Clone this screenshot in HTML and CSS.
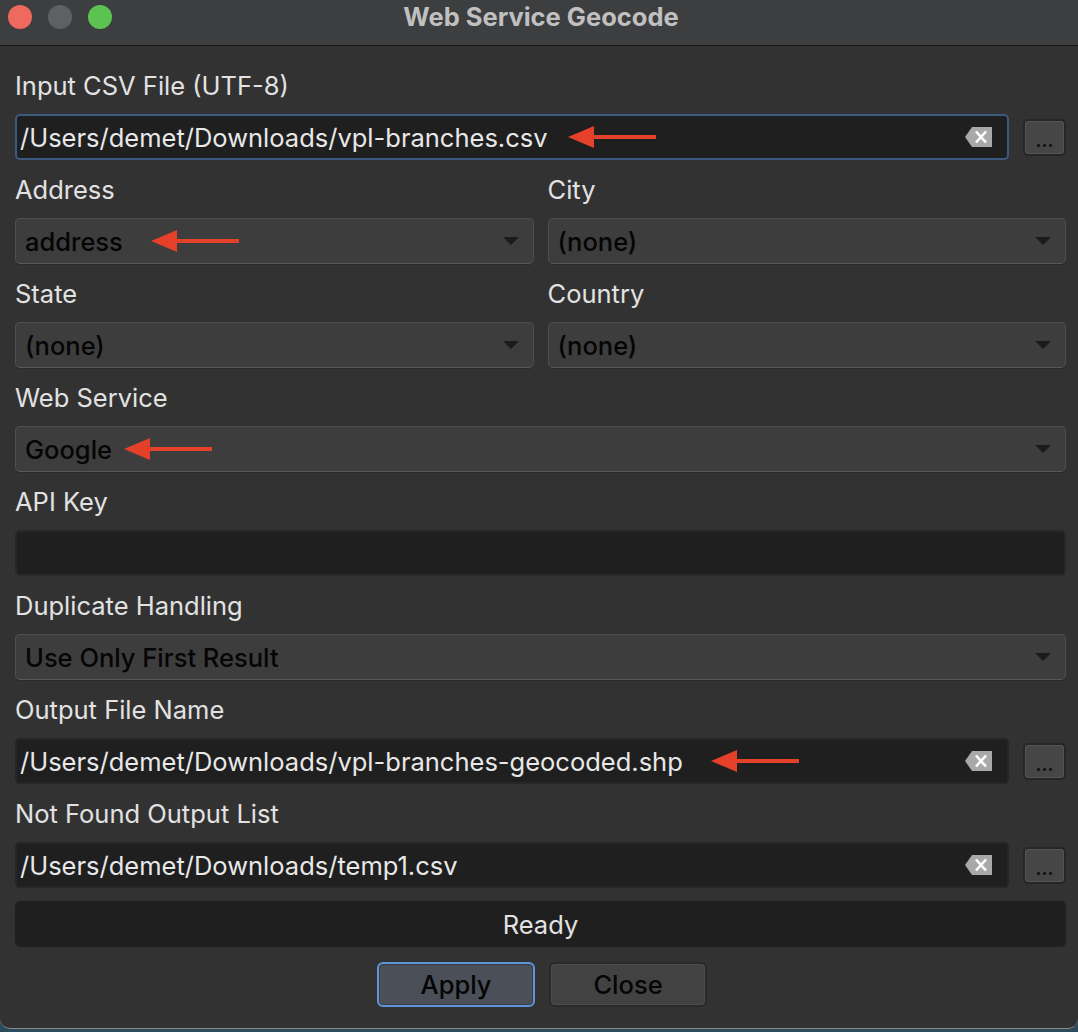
FILE: index.html
```html
<!DOCTYPE html>
<html>
<head>
<meta charset="utf-8">
<title>Web Service Geocode</title>
<link rel="stylesheet" href="styles.css">
</head>
<body>
<div class="window">
  <div class="titlebar">
    <div class="lights">
      <span class="light red"></span>
      <span class="light gray"></span>
      <span class="light green"></span>
    </div>
    <div class="title">Web Service Geocode</div>
    <div></div>
  </div>
  <div class="content">
    <div class="label">Input CSV File (UTF-8)</div>
    <div class="filerow">
      <div class="lineedit focus">
        <span class="val">/Users/demet/Downloads/vpl-branches.csv</span>
        <svg class="annot a1" width="90" height="24" viewBox="0 0 90 24"><polygon points="0,12 26,1 26,23" fill="#e5402a"/><rect x="24" y="10" width="64" height="4" fill="#e5402a"/></svg>
        <svg class="clear" width="27" height="20" viewBox="0 0 27 20"><polygon points="0,10 7,0 27,0 27,20 7,20" fill="#a9a9a9"/><path d="M11 4.5 L21 15.5 M21 4.5 L11 15.5" stroke="#fff" stroke-width="2.6"/></svg>
      </div>
      <button class="browse">...</button>
    </div>

    <div class="cols">
      <div>
        <div class="label">Address</div>
        <div class="combo"><span>address</span>
          <svg class="annot a2" width="90" height="24" viewBox="0 0 90 24"><polygon points="0,12 26,1 26,23" fill="#e5402a"/><rect x="24" y="10" width="64" height="4" fill="#e5402a"/></svg>
        </div>
      </div>
      <div>
        <div class="label">City</div>
        <div class="combo"><span>(none)</span></div>
      </div>
      <div>
        <div class="label">State</div>
        <div class="combo"><span>(none)</span></div>
      </div>
      <div>
        <div class="label">Country</div>
        <div class="combo"><span>(none)</span></div>
      </div>
    </div>

    <div class="label">Web Service</div>
    <div class="combo"><span>Google</span>
      <svg class="annot a3" width="90" height="24" viewBox="0 0 90 24"><polygon points="0,12 26,1 26,23" fill="#e5402a"/><rect x="24" y="10" width="64" height="4" fill="#e5402a"/></svg>
    </div>

    <div class="label">API Key</div>
    <div class="lineedit plain"></div>

    <div class="label">Duplicate Handling</div>
    <div class="combo"><span>Use Only First Result</span></div>

    <div class="label">Output File Name</div>
    <div class="filerow">
      <div class="lineedit">
        <span class="val">/Users/demet/Downloads/vpl-branches-geocoded.shp</span>
        <svg class="annot a4" width="90" height="24" viewBox="0 0 90 24"><polygon points="0,12 26,1 26,23" fill="#e5402a"/><rect x="24" y="10" width="64" height="4" fill="#e5402a"/></svg>
        <svg class="clear" width="27" height="20" viewBox="0 0 27 20"><polygon points="0,10 7,0 27,0 27,20 7,20" fill="#a9a9a9"/><path d="M11 4.5 L21 15.5 M21 4.5 L11 15.5" stroke="#fff" stroke-width="2.6"/></svg>
      </div>
      <button class="browse">...</button>
    </div>

    <div class="label">Not Found Output List</div>
    <div class="filerow">
      <div class="lineedit">
        <span class="val">/Users/demet/Downloads/temp1.csv</span>
        <svg class="clear" width="27" height="20" viewBox="0 0 27 20"><polygon points="0,10 7,0 27,0 27,20 7,20" fill="#a9a9a9"/><path d="M11 4.5 L21 15.5 M21 4.5 L11 15.5" stroke="#fff" stroke-width="2.6"/></svg>
      </div>
      <button class="browse">...</button>
    </div>

    <div class="status">Ready</div>

    <div class="buttons">
      <button class="btn default">Apply</button>
      <button class="btn">Close</button>
    </div>
  </div>
</div>
</body>
</html>
```

FILE: styles.css
```css
* { box-sizing: border-box; }
html, body { margin: 0; padding: 0; }
body {
  width: 1078px;
  height: 1032px;
  background: #2b4a5c;
  font-family: "Inter", "Noto Sans", sans-serif;
  overflow: hidden;
}
.window {
  height: 1029px;
  background: #323232;
  border-bottom: 1px solid #8a8a8a;
  border-radius: 0 0 10px 10px;
  overflow: hidden;
}
.titlebar {
  height: 46px;
  background: #3d3e40;
  border-bottom: 1px solid #161616;
  display: grid;
  grid-template-columns: 1fr auto 1fr;
  align-items: start;
  padding-top: 5px;
}
.lights {
  display: flex;
  gap: 16px;
  padding-left: 8px;
}
.light {
  width: 24px;
  height: 24px;
  border-radius: 50%;
  display: block;
}
.light.red { background: #ee6a5f; }
.light.gray { background: #5f6063; }
.light.green { background: #5cc353; }
.title {
  color: #c0c0c0;
  font-weight: 700;
  font-size: 25.5px;
  line-height: 24px;
  padding-left: 4px;
}
.content {
  padding: 10px 12px 0 15px;
}
.label {
  height: 58px;
  display: flex;
  align-items: center;
  color: #e2e2e2;
  font-size: 25.5px;
}
.filerow {
  display: flex;
  align-items: center;
  gap: 14px;
}
.lineedit {
  position: relative;
  flex: 1;
  height: 46px;
  background: #1f1f1f;
  border: 2px solid #262626;
  border-radius: 5px;
  display: flex;
  align-items: center;
  padding-left: 3px;
}
.lineedit.focus {
  border-color: #3b5a82;
}
.lineedit.plain {
  border-color: #282828;
}
.val {
  color: #e8e8e8;
  font-size: 25.5px;
  white-space: nowrap;
}
.clear {
  position: absolute;
  right: 15px;
  top: 50%;
  margin-top: -10px;
}
.annot {
  position: absolute;
  top: 50%;
  margin-top: -12px;
}
.a1 { left: 551px; }
.a2 { left: 135px; }
.a3 { left: 108px; }
.a4 { left: 694px; }
.browse {
  width: 43px;
  height: 37px;
  background: #464646;
  border: 2px solid #262626;
  border-radius: 5px;
  box-shadow: inset 0 0 0 1px #555;
  color: #111;
  font-family: "Inter", sans-serif;
  font-size: 18px;
  font-weight: 700;
  line-height: 1;
  padding: 8px 0 0 0;
  flex: none;
}
.cols {
  display: grid;
  grid-template-columns: 1fr 1fr;
  column-gap: 14px;
}
.combo {
  position: relative;
  height: 46px;
  background: #3d3d3d;
  border: 1px solid #4f4f4f;
  border-bottom-color: #575757;
  border-radius: 5px;
  box-shadow: 0 1px 0 #2a2a2a;
  display: flex;
  align-items: center;
  padding-left: 9px;
  color: #050505;
  font-size: 25.5px;
  font-weight: 500;
}
.combo::after {
  content: "";
  position: absolute;
  right: 14px;
  top: 50%;
  margin-top: -4px;
  border-left: 8px solid transparent;
  border-right: 8px solid transparent;
  border-top: 8px solid #1b1b1b;
}
.status {
  margin-top: 13px;
  height: 46px;
  background: #1f1f1f;
  border-radius: 5px;
  display: flex;
  align-items: center;
  justify-content: center;
  color: #e2e2e2;
  font-size: 25.5px;
}
.buttons {
  display: flex;
  justify-content: center;
  gap: 14px;
  margin-top: 15px;
  padding-left: 3px;
}
.btn {
  width: 158px;
  height: 45px;
  background: #424242;
  border: 2px solid #2a2a2a;
  border-radius: 6px;
  box-shadow: inset 0 0 0 1px #4d4d4d;
  color: #050505;
  font-family: "Inter", sans-serif;
  font-size: 25.5px;
  font-weight: 500;
}
.btn.default {
  background: #4b4f57;
  border-color: #5d95d8;
  box-shadow: inset 0 0 0 1px #3a3f47;
}
```
